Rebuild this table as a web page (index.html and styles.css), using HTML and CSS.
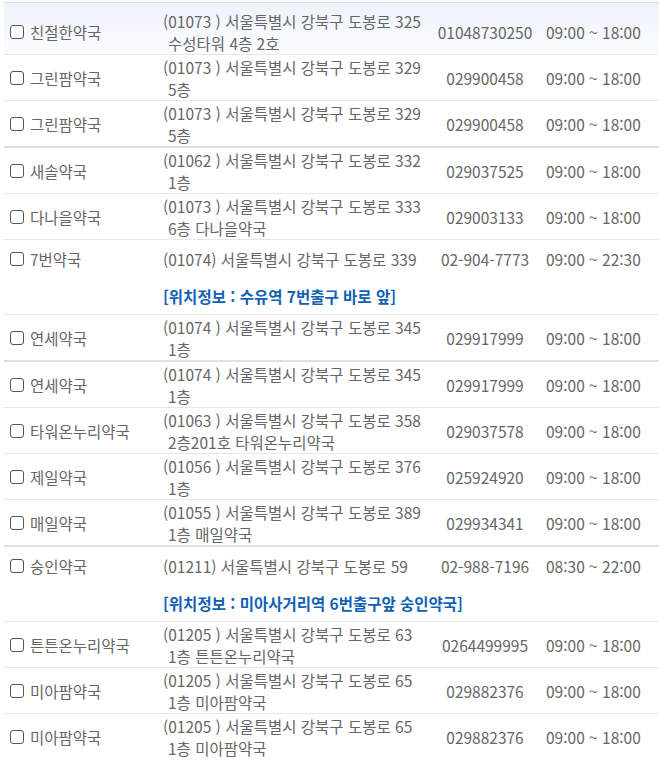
FILE: index.html
```html
<!DOCTYPE html>
<html lang="ko">
<head>
    <meta charset="UTF-8">
    <meta name="viewport" content="width=device-width, initial-scale=1.0">
    <title>약국 목록</title>
    <link rel="stylesheet" href="styles.css">
</head>
<body>

    <!-- 약국 목록 -->
    <div class="list">
        <div class="row first">
            <div class="main">
                <div class="name"><span class="check"></span>친절한약국</div>
                <div class="addr">(01073 ) 서울특별시 강북구 도봉로 325<span class="addr2">수성타워 4층 2호</span></div>
                <div class="tel">01048730250</div>
                <div class="time">09:00 ~ 18:00</div>
            </div>
        </div>
        <div class="row">
            <div class="main">
                <div class="name"><span class="check"></span>그린팜약국</div>
                <div class="addr">(01073 ) 서울특별시 강북구 도봉로 329<span class="addr2">5층</span></div>
                <div class="tel">029900458</div>
                <div class="time">09:00 ~ 18:00</div>
            </div>
        </div>
        <div class="row">
            <div class="main">
                <div class="name"><span class="check"></span>그린팜약국</div>
                <div class="addr">(01073 ) 서울특별시 강북구 도봉로 329<span class="addr2">5층</span></div>
                <div class="tel">029900458</div>
                <div class="time">09:00 ~ 18:00</div>
            </div>
        </div>
        <div class="row thick">
            <div class="main">
                <div class="name"><span class="check"></span>새솔약국</div>
                <div class="addr">(01062 ) 서울특별시 강북구 도봉로 332<span class="addr2">1층</span></div>
                <div class="tel">029037525</div>
                <div class="time">09:00 ~ 18:00</div>
            </div>
        </div>
        <div class="row">
            <div class="main">
                <div class="name"><span class="check"></span>다나을약국</div>
                <div class="addr">(01073 ) 서울특별시 강북구 도봉로 333<span class="addr2">6층 다나을약국</span></div>
                <div class="tel">029003133</div>
                <div class="time">09:00 ~ 18:00</div>
            </div>
        </div>
        <div class="row">
            <div class="main short">
                <div class="name"><span class="check"></span>7번약국</div>
                <div class="addr">(01074) 서울특별시 강북구 도봉로 339</div>
                <div class="tel">02-904-7773</div>
                <div class="time">09:00 ~ 22:30</div>
            </div>
            <div class="info">[위치정보 : 수유역 7번출구 바로 앞]</div>
        </div>
        <div class="row">
            <div class="main">
                <div class="name"><span class="check"></span>연세약국</div>
                <div class="addr">(01074 ) 서울특별시 강북구 도봉로 345<span class="addr2">1층</span></div>
                <div class="tel">029917999</div>
                <div class="time">09:00 ~ 18:00</div>
            </div>
        </div>
        <div class="row thick">
            <div class="main">
                <div class="name"><span class="check"></span>연세약국</div>
                <div class="addr">(01074 ) 서울특별시 강북구 도봉로 345<span class="addr2">1층</span></div>
                <div class="tel">029917999</div>
                <div class="time">09:00 ~ 18:00</div>
            </div>
        </div>
        <div class="row">
            <div class="main">
                <div class="name"><span class="check"></span>타워온누리약국</div>
                <div class="addr">(01063 ) 서울특별시 강북구 도봉로 358<span class="addr2">2층201호 타워온누리약국</span></div>
                <div class="tel">029037578</div>
                <div class="time">09:00 ~ 18:00</div>
            </div>
        </div>
        <div class="row">
            <div class="main">
                <div class="name"><span class="check"></span>제일약국</div>
                <div class="addr">(01056 ) 서울특별시 강북구 도봉로 376<span class="addr2">1층</span></div>
                <div class="tel">025924920</div>
                <div class="time">09:00 ~ 18:00</div>
            </div>
        </div>
        <div class="row">
            <div class="main">
                <div class="name"><span class="check"></span>매일약국</div>
                <div class="addr">(01055 ) 서울특별시 강북구 도봉로 389<span class="addr2">1층 매일약국</span></div>
                <div class="tel">029934341</div>
                <div class="time">09:00 ~ 18:00</div>
            </div>
        </div>
        <div class="row thick">
            <div class="main short">
                <div class="name"><span class="check"></span>숭인약국</div>
                <div class="addr">(01211) 서울특별시 강북구 도봉로 59</div>
                <div class="tel">02-988-7196</div>
                <div class="time">08:30 ~ 22:00</div>
            </div>
            <div class="info">[위치정보 : 미아사거리역 6번출구앞 숭인약국]</div>
        </div>
        <div class="row">
            <div class="main">
                <div class="name"><span class="check"></span>튼튼온누리약국</div>
                <div class="addr">(01205 ) 서울특별시 강북구 도봉로 63<span class="addr2">1층 튼튼온누리약국</span></div>
                <div class="tel">0264499995</div>
                <div class="time">09:00 ~ 18:00</div>
            </div>
        </div>
        <div class="row">
            <div class="main">
                <div class="name"><span class="check"></span>미아팜약국</div>
                <div class="addr">(01205 ) 서울특별시 강북구 도봉로 65<span class="addr2">1층 미아팜약국</span></div>
                <div class="tel">029882376</div>
                <div class="time">09:00 ~ 18:00</div>
            </div>
        </div>
        <div class="row">
            <div class="main">
                <div class="name"><span class="check"></span>미아팜약국</div>
                <div class="addr">(01205 ) 서울특별시 강북구 도봉로 65<span class="addr2">1층 미아팜약국</span></div>
                <div class="tel">029882376</div>
                <div class="time">09:00 ~ 18:00</div>
            </div>
        </div>
    </div>

</body>
</html>
```

FILE: styles.css
```css
body {
    margin: 0;
    padding-top: 2px;
    background-color: white;
    color: #666;
    font-family: "Noto Sans CJK KR", "Noto Sans", sans-serif;
    font-size: 15.5px;
    line-height: 22px;
    overflow: hidden;
}

.list {
    margin-left: 4px;
    border-top: 1px solid #dcdcdc;
}

.row {
    border-top: 1px solid #e6e6e6;
}

.row.first {
    border-top: none;
    background: linear-gradient(#eef3fb, #fbfcfe);
}

.row.thick {
    border-top: 2px solid #e0e0e0;
}

.main {
    display: flex;
    align-items: center;
    height: 45px;
}

.row.first .main {
    height: 44px;
    padding-top: 7px;
}

.main.short {
    height: 38px;
}

.name {
    display: flex;
    align-items: center;
    width: 145px;
    padding-left: 6px;
    white-space: nowrap;
}

.check {
    width: 12px;
    height: 12px;
    border: 1px solid #555;
    border-radius: 3px;
    margin-right: 6px;
    background-color: white;
}

.addr {
    width: 272px;
    padding-left: 8px;
    white-space: nowrap;
}

.addr2 {
    display: block;
    padding-left: 5px;
}

.tel {
    width: 100px;
    text-align: center;
}

.time {
    padding-left: 11px;
    white-space: nowrap;
}

.info {
    height: 36px;
    padding-left: 159px;
    color: #1161b5;
    font-weight: bold;
    line-height: 36px;
}
```
